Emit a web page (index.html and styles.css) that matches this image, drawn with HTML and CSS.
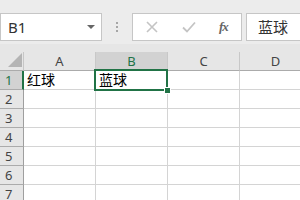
FILE: index.html
```html
<!DOCTYPE html>
<html>

<head>
    <meta charset="UTF-8">
    <title>sheet</title>
    <link rel="stylesheet" href="styles.css">
</head>

<body>
    <div class="toolbar">
        <div class="namebox">
            <span>B1</span>
            <i class="caret"></i>
        </div>
        <div class="grip"><i></i><i></i><i></i></div>
        <div class="fxbtns">
            <svg class="ico" width="12" height="12" viewBox="0 0 12 12"><path d="M1 1L11 11M11 1L1 11" stroke="#c4c4c4" stroke-width="1.6" fill="none"/></svg>
            <svg class="ico" width="14" height="12" viewBox="0 0 14 12"><path d="M1 6.5L5 10.5L13 1.5" stroke="#c4c4c4" stroke-width="1.8" fill="none"/></svg>
            <span class="fx">fx</span>
        </div>
        <div class="formula">蓝球</div>
    </div>
    <div class="sheet">
        <!-- 表头 -->
        <div class="corner"><i></i></div>
        <div class="colhead">A</div>
        <div class="colhead on">B</div>
        <div class="colhead">C</div>
        <div class="colhead">D</div>
        <!-- 第一行 -->
        <div class="rowhead on">1</div>
        <div class="cell">红球</div>
        <div class="cell">蓝球</div>
        <div class="cell"></div>
        <div class="cell"></div>
        <div class="rowhead">2</div><div class="cell"></div><div class="cell"></div><div class="cell"></div><div class="cell"></div>
        <div class="rowhead">3</div><div class="cell"></div><div class="cell"></div><div class="cell"></div><div class="cell"></div>
        <div class="rowhead">4</div><div class="cell"></div><div class="cell"></div><div class="cell"></div><div class="cell"></div>
        <div class="rowhead">5</div><div class="cell"></div><div class="cell"></div><div class="cell"></div><div class="cell"></div>
        <div class="rowhead">6</div><div class="cell"></div><div class="cell"></div><div class="cell"></div><div class="cell"></div>
        <div class="rowhead">7</div><div class="cell"></div><div class="cell"></div><div class="cell"></div><div class="cell"></div>
        <!-- 选中框 -->
        <div class="sel"><i class="handle"></i></div>
    </div>
</body>

</html>
```

FILE: styles.css
```css
* {
    margin: 0;
    padding: 0;
    box-sizing: border-box;
}
body {
    width: 300px;
    height: 200px;
    overflow: hidden;
    background-color: #e6e6e6;
    font-family: "Noto Sans", "Noto Sans CJK SC", sans-serif;
    color: #444;
}
/* 顶部名称框和编辑栏 */
.toolbar {
    display: flex;
    align-items: flex-start;
    height: 52px;
    padding-top: 13px;
    background: linear-gradient(#ececec 0 44px, #e6e6e6 44px);
    white-space: nowrap;
}
.namebox {
    display: flex;
    align-items: center;
    justify-content: space-between;
    width: 102px;
    height: 28px;
    padding: 0 6px 0 7px;
    background-color: #fff;
    border: 1px solid #c6c6c6;
    font-size: 15px;
    color: #333;
}
.caret {
    width: 0;
    height: 0;
    border-left: 4px solid transparent;
    border-right: 4px solid transparent;
    border-top: 4px solid #666;
}
.grip {
    display: flex;
    flex-direction: column;
    gap: 2px;
    margin: 9px 14px 0 14px;
}
.grip i {
    width: 2px;
    height: 2px;
    background-color: #a6a6a6;
}
.fxbtns {
    display: flex;
    align-items: center;
    width: 110px;
    height: 28px;
    padding-left: 13px;
    background-color: #fff;
    border: 1px solid #c6c6c6;
}
.ico {
    margin-right: 24px;
}
.ico + .ico {
    margin-right: 23px;
}
.fx {
    font-family: "Liberation Serif", serif;
    font-style: italic;
    font-weight: bold;
    font-size: 13px;
    color: #666;
    letter-spacing: -1px;
}
.formula {
    flex: 1;
    height: 28px;
    margin-left: 4px;
    padding-left: 11px;
    background-color: #fff;
    border: 1px solid #c6c6c6;
    border-right: 0;
    font-size: 15px;
    line-height: 26px;
    color: #333;
}
/* 表格区域 */
.sheet {
    position: relative;
    display: grid;
    grid-template-columns: 24px repeat(4, 72px);
    grid-template-rows: 19px repeat(7, 19px);
    width: 312px;
}
.corner {
    position: relative;
    border-right: 1px solid #c6c6c6;
    border-bottom: 1px solid #ababab;
}
.corner i {
    position: absolute;
    right: 1px;
    bottom: 3px;
    width: 0;
    height: 0;
    border-left: 14px solid transparent;
    border-bottom: 14px solid #b4b4b4;
}
.colhead {
    border-right: 1px solid #c8c8c8;
    border-bottom: 1px solid #ababab;
    text-align: center;
    font-size: 13px;
    line-height: 18px;
}
.colhead.on {
    background-color: #d2d2d2;
    color: #217346;
    border-bottom: 2px solid #217346;
}
.rowhead {
    padding-left: 5px;
    border-right: 1px solid #9f9f9f;
    border-bottom: 1px solid #ababab;
    font-size: 13px;
    line-height: 18px;
}
.rowhead.on {
    background-color: #d2d2d2;
    color: #217346;
    border-right: 2px solid #217346;
}
.cell {
    background-color: #fff;
    border-right: 1px solid #d4d4d4;
    border-bottom: 1px solid #d4d4d4;
    padding-left: 3px;
    font-size: 14px;
    line-height: 18px;
    color: #000;
}
/* 选中单元格的绿色框 */
.sel {
    position: absolute;
    left: 94px;
    top: 17px;
    width: 74px;
    height: 22px;
    border: 2px solid #217346;
}
.handle {
    position: absolute;
    right: -5px;
    bottom: -5px;
    width: 7px;
    height: 7px;
    background-color: #217346;
    border: 1px solid #fff;
}
```
